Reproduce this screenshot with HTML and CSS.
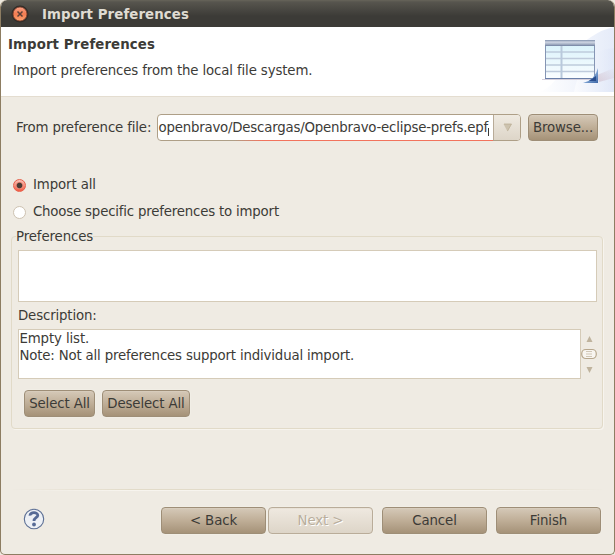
FILE: index.html
```html
<!DOCTYPE html>
<html lang="en">
<head>
<meta charset="utf-8">
<title>Import Preferences</title>
<link rel="stylesheet" href="styles.css">
</head>
<body>
<main class="window">
  <header class="titlebar">
    <svg class="close" width="18" height="18" viewBox="0 0 18 18">
      <defs><linearGradient id="orange" x2="0" y2="1"><stop stop-color="#f9a287"/><stop offset=".5" stop-color="#f37b50"/><stop offset="1" stop-color="#ffa36f"/></linearGradient></defs>
      <circle cx="9" cy="9" r="8.5" fill="#2e2c28"/>
      <circle cx="9" cy="9" r="7" fill="url(#orange)" stroke="#783c29" stroke-width=".8"/>
      <path d="M6.500 6.500l5 5m0-5l-5 5" stroke="#5c4037" stroke-width="1.500"/>
    </svg>
    <h1>Import Preferences</h1>
  </header>
  <section class="banner">
    <div class="banner-text">
      <h2>Import Preferences</h2>
      <p>Import preferences from the local file system.</p>
    </div>
    <svg class="banner-art" width="75" height="69" viewBox="0 0 75 69">
      <defs>
        <linearGradient id="sky" x1="0" x2="1"><stop stop-color="#fff"/><stop offset="1" stop-color="#dde5f7"/></linearGradient>
        <linearGradient id="head" x2="0" y2="1"><stop stop-color="#8090ac"/><stop offset=".35" stop-color="#d0d6e3"/><stop offset=".7" stop-color="#a5b0c5"/><stop offset="1" stop-color="#7080a0"/></linearGradient>
        <linearGradient id="cells" x2="0" y2="1"><stop stop-color="#d9f2fb"/><stop offset="1" stop-color="#fafdff"/></linearGradient>
        <linearGradient id="fold" x1=".3" y1=".2" x2="1" y2="1"><stop stop-color="#b8d4f0"/><stop offset=".4" stop-color="#7fa5d4"/><stop offset="1" stop-color="#3d66a5"/></linearGradient>
        <linearGradient id="glow" x1="0" x2="1" y1="1" y2="0"><stop stop-color="#cdb9c6" stop-opacity=".6"/><stop offset="1" stop-color="#cdb9c6" stop-opacity="0"/></linearGradient>
      </defs>
      <path d="M0 65C20 60 32 22 52 10Q64 2 75 0V65Z" fill="url(#sky)" opacity=".75"/>
      <path d="M35 65C42 32 55 23 75 21V65Z" fill="url(#sky)" opacity=".6"/>
      <path d="M58 48L75 41V51L60 55Z" fill="url(#glow)"/>
      <path d="M3 52.500H55" stroke="#d5d0dc"/>
      <rect x="6.500" y="15.500" width="49" height="36" fill="url(#cells)" stroke="#8595b4"/>
      <path d="M7 25h48M7 31.500h48M7 38h48M7 44.500h48" stroke="#bfcbdc" stroke-width="1.500"/>
      <path d="M22.500 18V51" stroke="#b9c9dc" stroke-width="2"/>
      <rect x="6" y="13" width="50" height="6" fill="url(#head)"/>
      <path d="M6 51.500H55" stroke="#6a7fa8"/>
      <path d="M59 41V56H44Q56 53 59 41Z" fill="url(#fold)"/>
      <path d="M57 49V54H50Z" fill="#294d8e"/>
    </svg>
  </section>
  <section class="body">
    <div class="file-row">
      <label class="file-label">From preference file:</label>
      <div class="combo">
        <div class="combo-input"><span>openbravo/Descargas/Openbravo-eclipse-prefs.epf</span><i class="caret"></i></div>
        <div class="combo-drop"><svg width="9" height="9"><path d="M0.500 1H8.500L4.500 8.500Z" fill="#ccc2ae"/><path d="M1 1H8.500L4.500 8" fill="none" stroke="#b8aa91" stroke-width=".7"/></svg></div>
      </div>
      <button class="browse">Browse...</button>
    </div>
    <div class="radio first"><i class="dot on"></i><span class="t-all">Import all</span></div>
    <div class="radio"><i class="dot"></i><span class="t-choose">Choose specific preferences to import</span></div>
    <fieldset class="group">
      <legend>Preferences</legend>
      <div class="list"></div>
      <div class="desc-label">Description:</div>
      <div class="desc-row">
        <div class="desc">Empty list.<br><span class="t-note">Note: Not all preferences support individual import.</span></div>
        <svg class="scroll" width="16" height="50" viewBox="0 0 16 50">
          <path d="M8.500 7L11.500 13H5.500Z" fill="#bfb39d"/>
          <rect x=".75" y="20.500" width="14.500" height="9" rx="4" fill="#f8f5f0" stroke="#b7a78d" stroke-width="1.200"/>
          <path d="M5 22.500h6M5 25h6M5 27.500h6" stroke="#c7bba7" stroke-width=".8"/>
          <path d="M5.500 38H11.500L8.500 44Z" fill="#bfb39d"/>
        </svg>
      </div>
      <div class="select-row"><button class="sel">Select All</button><button class="desel">Deselect All</button></div>
    </fieldset>
  </section>
  <div class="rule"></div>
  <footer class="actions">
    <svg class="help" width="22" height="22" viewBox="0 0 22 22">
      <circle cx="11" cy="11" r="9.700" fill="#edf0f5" stroke="#5b6e94" stroke-width="1.100"/>
      <path d="M7 7.600C6.800 3.800 15 3.800 14.800 7.300C14.600 9.800 11 9.800 11 13" fill="none" stroke="#566a96" stroke-width="2.800"/>
      <circle cx="11" cy="16.500" r="1.900" fill="#566a96"/>
    </svg>
    <button class="wide back">&lt; Back</button>
    <button class="wide next" disabled>Next &gt;</button>
    <button class="wide cancel">Cancel</button>
    <button class="wide finish">Finish</button>
  </footer>
</main>
</body>
</html>
```
FILE: styles.css
```css
* { box-sizing: border-box; }
body { margin: 0; background: #eee9df; font: 13.33px/17px "DejaVu Sans", sans-serif; color: #3c3b37; }
.window { width: 615px; height: 555px; display: flex; flex-direction: column; border: 1px solid #8d7d62; border-top: 0; border-radius: 7px 7px 5px 5px; background: #efebe3; overflow: hidden; white-space: nowrap; }
.titlebar { height: 27px; flex: none; display: flex; align-items: center; padding-left: 10px; background: linear-gradient(#67645a 0, #57554e 2px, #3c3b37 60%, #3c3b37); border-radius: 6px 6px 0 0; }
.close { margin-top: 1px; }
h1, h2, p { margin: 0; font-size: 13.33px; }
h1, h2 { letter-spacing: .09px; }
h1 { margin: 1px 0 0 13px; color: #dfdbd2; }
.banner { height: 69px; flex: none; display: flex; justify-content: space-between; background: #fff; }
.banner-text { padding: 9px 0 0 7px; }
.banner p { margin: 9px 0 0 5px; letter-spacing: -.13px; }
.body { height: 394px; flex: none; padding: 17px 0 0 10px; border-top: 1px solid #e4ddd0; }
.file-row { display: flex; height: 27px; }
.file-label { width: 141px; margin-left: 5px; padding-top: 5px; letter-spacing: -.15px; }
.combo { width: 364px; height: 27px; display: flex; border: 1px solid #ae9f87; border-radius: 4px; background: #fff; }
.combo-input { width: 335px; padding: 4px 0 0 .5px; display: flex; border-bottom: 1px solid transparent; position: relative; letter-spacing: -.21px; }
.combo-input::after { content: ""; position: absolute; left: 75px; right: 0; bottom: -2px; height: 1px; background: linear-gradient(90deg, #ae9f87, #f2735d 30px); }
.caret { width: 1px; height: 8px; margin-top: 9px; background: #3c3b37; }
.combo-drop { flex: 1; border-left: 1px solid #b8ab98; border-radius: 0 3px 3px 0; background: linear-gradient(#efeae1, #ddd5c8); display: flex; align-items: center; justify-content: center; }
button { height: 27px; padding: 0 0 1px; font: inherit; color: #3c3b37; border: 1px solid #9e8e77; border-radius: 4px; background: linear-gradient(#d5c9b8, #bfae97 50%, #a59278); box-shadow: inset 0 1px #dfd4c655, 0 0 0 1px #f6f2eb66; }
.browse { width: 70px; margin-left: 7px; letter-spacing: -.13px; }
.radio { display: flex; height: 27px; align-items: center; padding-left: 2px; }
.first { margin-top: 30px; }
.dot { width: 13px; height: 13px; margin: 1px 7px 0 0; border: 1px solid #cdc2b1; border-radius: 50%; background: #fff; }
.t-all { letter-spacing: -.12px; }
.t-choose { letter-spacing: -.19px; }
.t-note { letter-spacing: -.17px; }
.on { border-color: #e6604b; background: radial-gradient(circle, #493b35 0 2.300px, #ef8c78 3.300px, transparent 4px), linear-gradient(#f9c2b8, #f45c44); }
.group { width: 592px; height: 201px; margin: 3px 0 0; padding: 0 5px 0 6px; border: 1px solid #e1dac8; border-radius: 4px; box-shadow: 1px 1px #f7f4ee; }
legend { height: 17px; margin-left: -2px; padding: 0; letter-spacing: -.12px; }
.list { height: 52px; margin-top: 5px; border: 1px solid #d5cbb8; background: #fff; width: 579px; }
.desc-label { margin-top: 5px; letter-spacing: -.15px; }
.desc-row { display: flex; margin-top: 5px; }
.desc { width: 563px; height: 50px; flex: none; padding-left: .4px; border: 1px solid #d5cbb8; background: #fff; letter-spacing: -.12px; }
.scroll { flex: none; }
.select-row { display: flex; gap: 7px; margin: 11px 0 0 6px; }
.select-row button { letter-spacing: -.12px; }
.sel { width: 71px; }
.desel { width: 88px; }
.rule { height: 2px; flex: none; margin: -1px 10px 0; background: linear-gradient(#e2dbc9 50%, #f7f4ee 50%); mask-image: linear-gradient(90deg, transparent, #000 20%, #000 80%, transparent); }
.actions { display: flex; padding: 16px 0 0 22px; }
.help { margin-top: 1px; }
.wide { width: 105px; flex: none; letter-spacing: -.1px; }
.back { margin-left: 116px; }
.next { margin-left: 2px; color: #b9ae9c; border-color: #b9ac99; background: linear-gradient(#efe9e0, #ddd5c8); text-shadow: 1px 1px #fff; }
.cancel, .finish { margin-left: 9px; }
```
